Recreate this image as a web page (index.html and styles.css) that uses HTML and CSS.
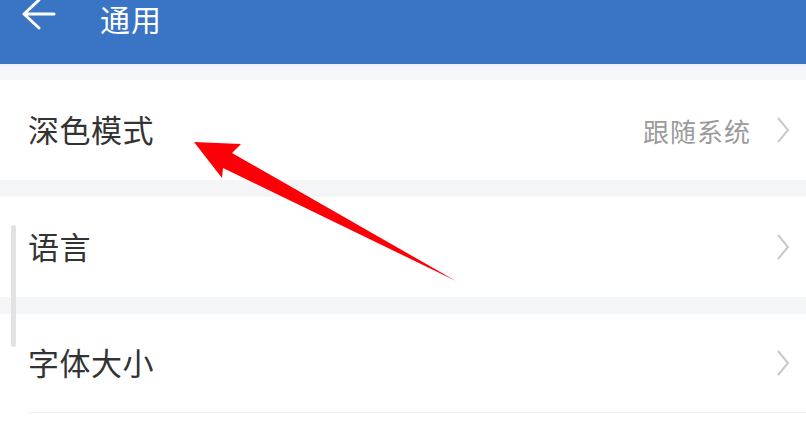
FILE: index.html
```html
<!DOCTYPE html>
<html lang="zh-CN">
<head>
<meta charset="utf-8">
<link rel="stylesheet" href="styles.css">
</head>
<body>
<div class="page">
  <header class="topbar">
    <div class="topbar-row">
      <svg class="back" width="36" height="34" viewBox="0 0 36 34"><path d="M33 15 H3 M18 1 L3 15 L18 29" fill="none" stroke="#fff" stroke-width="3" stroke-linecap="round" stroke-linejoin="round"/></svg>
      <span class="title">通用</span>
    </div>
  </header>
  <div class="gap first"></div>
  <div class="row">
    <span class="label">深色模式</span>
    <span class="value">跟随系统</span>
    <svg class="chev" width="14" height="26" viewBox="0 0 14 26"><path d="M2 1 L12 13 L2 25" fill="none" stroke="#c9c9c9" stroke-width="2"/></svg>
  </div>
  <div class="gap"></div>
  <div class="row">
    <span class="label">语言</span>
    <svg class="chev" width="14" height="26" viewBox="0 0 14 26"><path d="M2 1 L12 13 L2 25" fill="none" stroke="#c9c9c9" stroke-width="2"/></svg>
  </div>
  <div class="gap"></div>
  <div class="row divided">
    <span class="label">字体大小</span>
    <svg class="chev" width="14" height="26" viewBox="0 0 14 26"><path d="M2 1 L12 13 L2 25" fill="none" stroke="#c9c9c9" stroke-width="2"/></svg>
  </div>
  <div class="scrollbar"></div>
  <svg class="pointer" width="806" height="446" viewBox="0 0 806 446"><polygon points="194,142 241,144 232,153 456,281 223,168 222,178" fill="#fb0007"/></svg>
</div>
</body>
</html>
```
FILE: styles.css
```css
* { box-sizing: border-box; }
html, body { margin: 0; padding: 0; background: #fff; }
body { font-family: "Noto Sans CJK SC", "Noto Sans", sans-serif; width: 806px; height: 446px; overflow: hidden; }
.page { position: relative; width: 806px; height: 446px; background: #fff; }
.topbar { height: 64px; background: #3a74c5; }
.topbar-row { height: 36px; display: flex; align-items: center; padding-left: 21px; }
.back { display: block; margin-top: -4px; }
.title { color: #fff; font-size: 30px; margin-left: 43px; line-height: 36px; letter-spacing: 1px; }
.gap { height: 17px; background: #f4f5f7; }
.gap.first { height: 16px; background: linear-gradient(#e9edf4 0, #f4f6f9 3px, #f6f7f9 100%); }
.row { height: 100px; display: flex; align-items: center; padding: 0 16px 0 28px; background: #fff; }
.row.divided { height: 99px; border-bottom: 1px solid #efefef; margin-left: 28px; padding-left: 0; }
.label { font-size: 31px; color: #333; flex: 1; letter-spacing: 0.5px; margin-top: -3px; }
.value { font-size: 26px; color: #9b9b9b; margin-right: 25px; letter-spacing: 1px; }
.chev { display: block; }
.scrollbar { position: absolute; left: 11px; top: 225px; width: 5px; height: 122px; border-radius: 3px; background: #e2e2e2; }
.pointer { position: absolute; left: 0; top: 0; }
```
